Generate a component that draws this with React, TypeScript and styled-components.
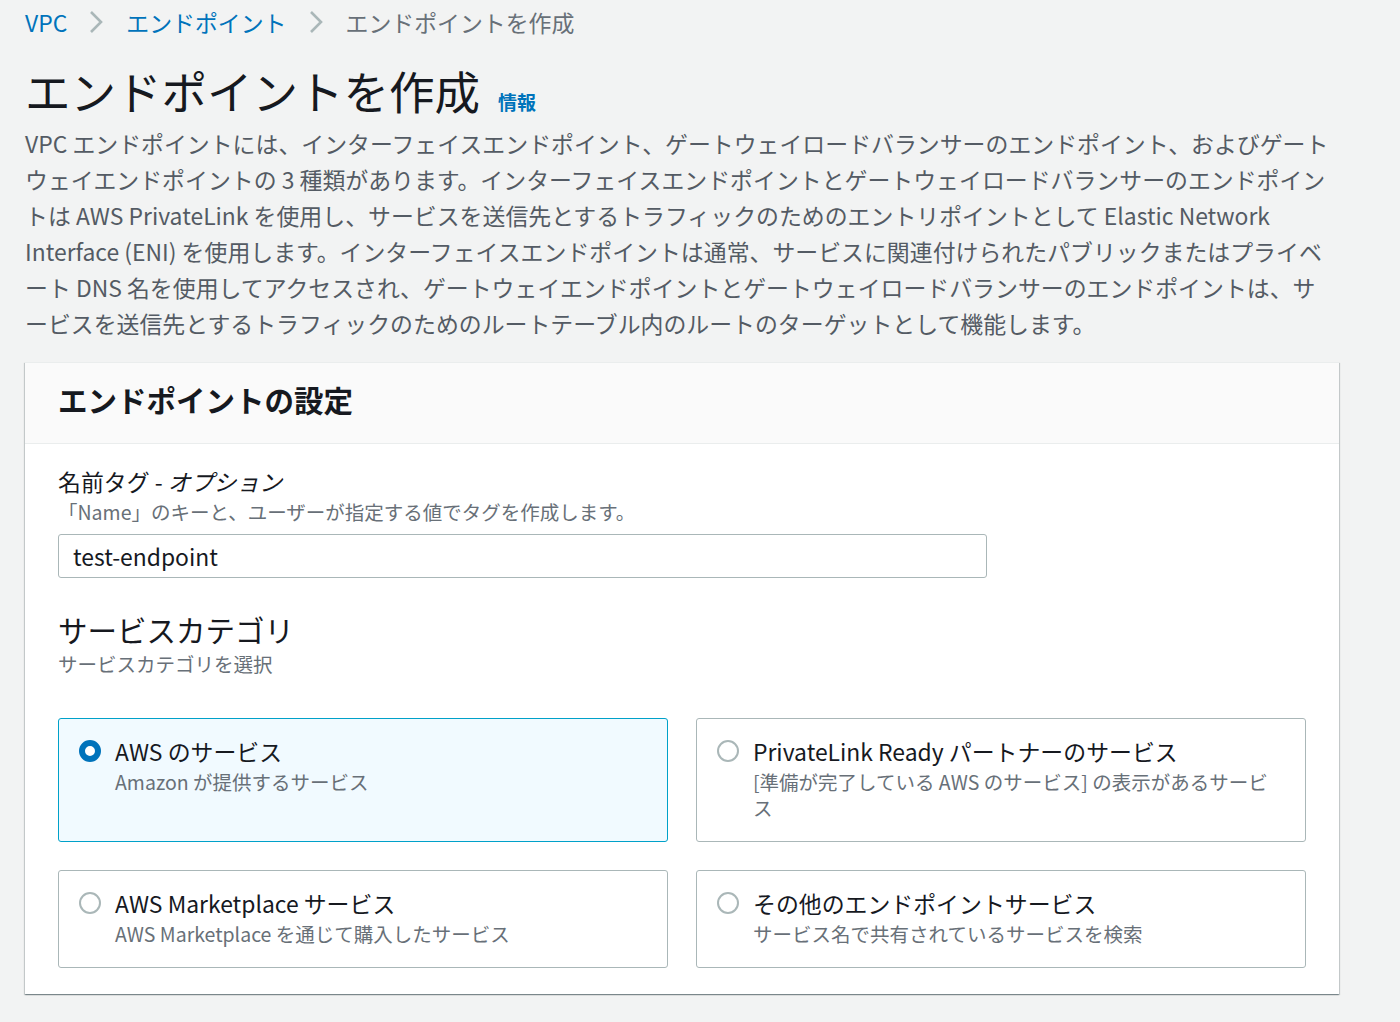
import React from "react";
import styled, { createGlobalStyle } from "styled-components";

const Global = createGlobalStyle`
  html, body { margin: 0; padding: 0; background: #f2f3f3; }
  body { font-family: "Noto Sans CJK JP", "Noto Sans", sans-serif; color: #16191f; }
  * { box-sizing: border-box; }
`;

const Page = styled.div`
  width: 1400px;
  height: 1022px;
  overflow: hidden;
  padding: 4px 0 0 25px;
  display: flex;
  flex-direction: column;
`;

const Crumbs = styled.nav`
  display: flex;
  align-items: center;
  height: 36px;
  font-size: 22.9px;
  line-height: 36px;
`;

const CrumbLink = styled.span`
  color: #0073bb;
`;

const CrumbCurrent = styled.span`
  color: #687078;
`;

const Chevron = styled.svg`
  width: 16px;
  height: 24px;
  margin: 0 22px 0 21px;
`;

const TitleRow = styled.div`
  display: flex;
  align-items: baseline;
  margin-top: 21px;
  height: 58px;
`;

const Title = styled.h1`
  margin: 0;
  font-size: 45.5px;
  font-weight: 400;
  line-height: 58px;
  color: #16191f;
`;

const InfoLink = styled.span`
  margin-left: 18px;
  font-size: 19px;
  font-weight: 700;
  color: #0073bb;
`;

const Desc = styled.p`
  margin: 6px 0 0;
  font-size: 22.9px;
  line-height: 36px;
  color: #545b64;
  white-space: nowrap;
`;

const Panel = styled.section`
  margin-top: 21px;
  width: 1314px;
  background: #fff;
  box-shadow: 0 1px 1px 0 rgba(0, 28, 36, 0.3), 1px 1px 1px 0 rgba(0, 28, 36, 0.15),
    -1px 1px 1px 0 rgba(0, 28, 36, 0.15);
  border-top: 1px solid #eaeded;
`;

const PanelHeader = styled.header`
  background: #fafafa;
  border-bottom: 1px solid #eaeded;
  padding: 18px 33px 26px;
`;

const PanelTitle = styled.h2`
  margin: 0;
  font-size: 29.5px;
  font-weight: 700;
  line-height: 36px;
  color: #16191f;
`;

const PanelBody = styled.div`
  padding: 19px 33px 26px;
  display: flex;
  flex-direction: column;
`;

const Label = styled.div`
  font-size: 22.9px;
  line-height: 36px;
  color: #16191f;
`;

const Optional = styled.i`
  font-style: italic;
`;

const Hint = styled.div`
  font-size: 19.5px;
  line-height: 26px;
  color: #687078;
`;

const Input = styled.div`
  margin-top: 9px;
  width: 929px;
  height: 44px;
  border: 1.5px solid #aab7b8;
  border-radius: 3px;
  padding: 0 14px;
  display: flex;
  align-items: center;
  font-size: 22.9px;
  color: #16191f;
`;

const SectionHeading = styled.h3`
  margin: 33px 0 0;
  font-size: 29.5px;
  font-weight: 400;
  line-height: 36px;
  color: #16191f;
`;

const SectionHint = styled(Hint)`
  margin-top: 4px;
`;

const TileGrid = styled.div`
  margin-top: 41px;
  display: grid;
  grid-template-columns: 610px 610px;
  column-gap: 28px;
  row-gap: 28px;
`;

const Tile = styled.div<{ $selected?: boolean }>`
  display: flex;
  align-items: flex-start;
  gap: 14px;
  padding: 14px 20px 20px 20px;
  border: 1.5px solid ${(p) => (p.$selected ? "#00a1c9" : "#aab7b8")};
  border-radius: 3px;
  background: ${(p) => (p.$selected ? "#f1faff" : "#fff")};
`;

const Radio = styled.span<{ $checked?: boolean }>`
  flex: none;
  margin-top: 7px;
  width: 22px;
  height: 22px;
  border-radius: 50%;
  background: #fff;
  border: ${(p) => (p.$checked ? "6.5px solid #0073bb" : "2px solid #aab7b8")};
`;

const TileText = styled.div`
  display: flex;
  flex-direction: column;
  min-width: 0;
`;

const TileTitle = styled.div`
  font-size: 22.9px;
  line-height: 36px;
  color: #16191f;
`;

const TileSub = styled.div`
  font-size: 19.5px;
  line-height: 26px;
  color: #687078;
`;

const ChevronIcon = () => (
  <Chevron viewBox="0 0 16 24">
    <polyline points="3,2 13,12 3,22" fill="none" stroke="#aab7b8" strokeWidth="2.6" />
  </Chevron>
);

const tiles = [
  { title: "AWS のサービス", sub: "Amazon が提供するサービス", selected: true },
  {
    title: "PrivateLink Ready パートナーのサービス",
    sub: "[準備が完了している AWS のサービス] の表示があるサービス",
  },
  { title: "AWS Marketplace サービス", sub: "AWS Marketplace を通じて購入したサービス" },
  { title: "その他のエンドポイントサービス", sub: "サービス名で共有されているサービスを検索" },
];

export default function App() {
  return (
    <>
      <Global />
      <Page>
        <Crumbs>
          <CrumbLink>VPC</CrumbLink>
          <ChevronIcon />
          <CrumbLink>エンドポイント</CrumbLink>
          <ChevronIcon />
          <CrumbCurrent>エンドポイントを作成</CrumbCurrent>
        </Crumbs>
        <TitleRow>
          <Title>エンドポイントを作成</Title>
          <InfoLink>情報</InfoLink>
        </TitleRow>
        <Desc>
          VPC エンドポイントには、インターフェイスエンドポイント、ゲートウェイロードバランサーのエンドポイント、およびゲート
          <br />
          ウェイエンドポイントの 3 種類があります。インターフェイスエンドポイントとゲートウェイロードバランサーのエンドポイン
          <br />
          トは AWS PrivateLink を使用し、サービスを送信先とするトラフィックのためのエントリポイントとして Elastic Network
          <br />
          Interface (ENI) を使用します。インターフェイスエンドポイントは通常、サービスに関連付けられたパブリックまたはプライベ
          <br />
          ート DNS 名を使用してアクセスされ、ゲートウェイエンドポイントとゲートウェイロードバランサーのエンドポイントは、サ
          <br />
          ービスを送信先とするトラフィックのためのルートテーブル内のルートのターゲットとして機能します。
        </Desc>
        <Panel>
          <PanelHeader>
            <PanelTitle>エンドポイントの設定</PanelTitle>
          </PanelHeader>
          <PanelBody>
            <Label>
              名前タグ - <Optional>オプション</Optional>
            </Label>
            <Hint>「Name」のキーと、ユーザーが指定する値でタグを作成します。</Hint>
            <Input>test-endpoint</Input>
            <SectionHeading>サービスカテゴリ</SectionHeading>
            <SectionHint>サービスカテゴリを選択</SectionHint>
            <TileGrid>
              {tiles.map((t) => (
                <Tile key={t.title} $selected={t.selected}>
                  <Radio $checked={t.selected} />
                  <TileText>
                    <TileTitle>{t.title}</TileTitle>
                    <TileSub>{t.sub}</TileSub>
                  </TileText>
                </Tile>
              ))}
            </TileGrid>
          </PanelBody>
        </Panel>
      </Page>
    </>
  );
}
